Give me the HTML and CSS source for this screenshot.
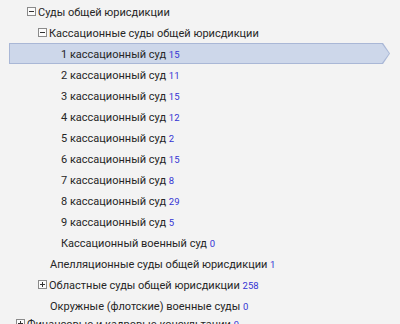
FILE: index.html
```html
<!DOCTYPE html>
<html>
<head>
<meta charset="utf-8">
<link rel="stylesheet" href="styles.css">
</head>
<body>
<div class="tree">
  <div class="row l1"><span class="tog minus"></span><span class="lbl">Суды общей юрисдикции</span></div>
  <div class="row l2"><span class="tog minus"></span><span class="lbl">Кассационные суды общей юрисдикции</span></div>
  <div class="row l3 sel"><div class="fill"><span class="lbl">1 кассационный суд <span class="n">15</span></span></div></div>
  <div class="row l3"><span class="lbl">2 кассационный суд <span class="n">11</span></span></div>
  <div class="row l3"><span class="lbl">3 кассационный суд <span class="n">15</span></span></div>
  <div class="row l3"><span class="lbl">4 кассационный суд <span class="n">12</span></span></div>
  <div class="row l3"><span class="lbl">5 кассационный суд <span class="n">2</span></span></div>
  <div class="row l3"><span class="lbl">6 кассационный суд <span class="n">15</span></span></div>
  <div class="row l3"><span class="lbl">7 кассационный суд <span class="n">8</span></span></div>
  <div class="row l3"><span class="lbl">8 кассационный суд <span class="n">29</span></span></div>
  <div class="row l3"><span class="lbl">9 кассационный суд <span class="n">5</span></span></div>
  <div class="row l3"><span class="lbl">Кассационный военный суд <span class="n">0</span></span></div>
  <div class="row l2"><span class="lbl">Апелляционные суды общей юрисдикции <span class="n">1</span></span></div>
  <div class="row l2"><span class="tog plus"></span><span class="lbl">Областные суды общей юрисдикции <span class="n">258</span></span></div>
  <div class="row l2"><span class="lbl">Окружные (флотские) военные суды <span class="n">0</span></span></div>
  <div class="row l0"><span class="tog plus"></span><span class="lbl">Финансовые и кадровые консультации <span class="n">9</span></span></div>
</div>
</body>
</html>
```
FILE: styles.css
```css
html, body {
  margin: 0;
  padding: 0;
  background: #f3f3f3;
  overflow: hidden;
}
body {
  font-family: Roboto, "Noto Sans", sans-serif;
  font-size: 11px;
  color: #262626;
}
.tree {
  padding-top: 1px;
  margin-left: 9px;
  width: 381px;
}
.row {
  height: 21px;
  display: flex;
  align-items: center;
  white-space: nowrap;
  box-sizing: border-box;
}
.l0 { padding-left: 7px; margin-top: -3px; }
.l1 { padding-left: 18px; }
.l2 { padding-left: 29px; }
.l2 .lbl:first-child { padding-left: 12px; }
.l3 { padding-left: 52px; }
.l0 .lbl:first-child { padding-left: 11px; }
.lbl { padding-top: 1px; }
.tog {
  width: 9px;
  height: 9px;
  box-sizing: border-box;
  border: 1px solid #8a8a8a;
  background: #fbfbfb;
  position: relative;
  margin-right: 2px;
  flex: none;
}
.tog::before {
  content: "";
  position: absolute;
  left: 1px;
  top: 3px;
  width: 5px;
  height: 1px;
  background: #333;
}
.plus::after {
  content: "";
  position: absolute;
  left: 3px;
  top: 1px;
  width: 1px;
  height: 5px;
  background: #333;
}
.n {
  color: #3434d4;
  font-size: 9.5px;
}
.row.sel {
  padding: 1px;
  background: #a9b7d6;
  clip-path: polygon(0 0, calc(100% - 7px) 0, 100% 50%, calc(100% - 7px) 100%, 0 100%);
}
.sel .fill {
  flex: 1;
  height: 100%;
  display: flex;
  align-items: center;
  padding-left: 51px;
  background: #cdd7ea;
  clip-path: polygon(0 0, calc(100% - 7px) 0, 100% 50%, calc(100% - 7px) 100%, 0 100%);
}
```
